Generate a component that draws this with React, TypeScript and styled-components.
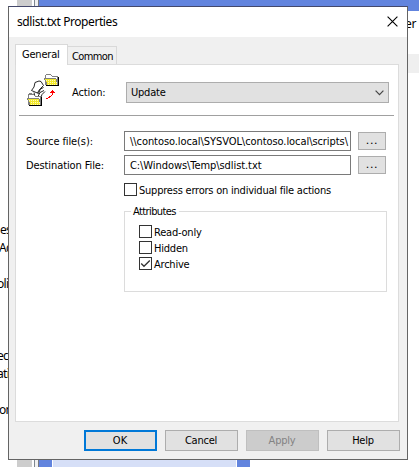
import React from 'react';
import styled, { createGlobalStyle } from 'styled-components';

const GlobalStyle = createGlobalStyle`
  *, *::before, *::after { box-sizing: border-box; }
  html, body, #root { margin: 0; height: 100%; }
  body { overflow: hidden; background: #fff; color: #000; }
`;

const Desktop = styled.div`
  position: relative;
  width: 419px;
  height: 467px;
  overflow: hidden;
  display: flex;
  background: #fff;
  font: 12px/18px "Noto Sans", sans-serif;
`;

const TreePane = styled.div`
  width: 17px;
  padding-top: 221px;
`;

const TreeText = styled.div<{ $shift?: number }>`
  height: 18px;
  white-space: nowrap;
  letter-spacing: -0.7px;
  text-indent: ${(p) => p.$shift ?? 0}px;
`;

const ScrollTrack = styled.div`
  width: 15px;
  background: #cdcdcd;
`;

const Splitter = styled.div`
  width: 7px;
  background: linear-gradient(
    to right,
    #fff 2px, #7f8790 2px, #7f8790 3px, #f0f0f0 3px, #f0f0f0 6px, #77777d 6px
  );
`;

const ContentPane = styled.div`
  flex: 1;
  display: flex;
  flex-direction: column;
`;

const BlueHeader = styled.div`
  height: 11px;
  background: #6284de;
`;

const ColumnTitle = styled.div`
  height: 43px;
  padding-top: 4px;
  text-align: right;
  padding-right: 3px;
  letter-spacing: -0.4px;
`;

const GreyBand = styled.div`
  height: 19px;
  background: #efefef;
`;

const BottomStrip = styled.div`
  height: 8px;
  width: 211px;
  margin-top: auto;
  border: solid #6284de;
  border-width: 0 13px;
  background: #d6dff7;
  box-shadow: inset 1px 0 #fff, inset -1px 0 #fff;
`;

const Dialog = styled.section`
  position: absolute;
  left: 8px;
  top: 6px;
  width: 400px;
  height: 454px;
  display: flex;
  flex-direction: column;
  border: 1px solid #646464;
  border-top-color: #44486b;
  background: #f0f0f0;
  font: 11px/14px "DejaVu Sans Condensed", "DejaVu Sans", sans-serif;
  letter-spacing: -0.22px;
`;

const TitleBar = styled.header`
  height: 30px;
  flex: none;
  display: flex;
  align-items: center;
  justify-content: space-between;
  padding: 0 9px 0 8px;
  background: #fff;
  font: 12px/18px "Noto Sans", sans-serif;
  letter-spacing: -0.42px;
`;

const TabStrip = styled.nav`
  height: 27px;
  flex: none;
  display: flex;
  align-items: flex-end;
  padding-left: 6px;
`;

const Tab = styled.div<{ $active?: boolean }>`
  position: relative;
  width: ${(p) => (p.$active ? 53 : 49)}px;
  height: ${(p) => (p.$active ? 21 : 18)}px;
  margin-bottom: ${(p) => (p.$active ? -1 : 0)}px;
  padding: ${(p) => (p.$active ? '3px 0 0 6px' : '3px 0 0 4px')};
  border: 1px solid #d9d9d9;
  border-bottom: 0;
  border-left-width: ${(p) => (p.$active ? 1 : 0)}px;
  background: ${(p) => (p.$active ? '#fff' : '#f0f0f0')};
  letter-spacing: ${(p) => (p.$active ? -0.2 : -0.6)}px;
`;

const Panel = styled.main`
  width: 384px;
  height: 358px;
  flex: none;
  margin-left: 6px;
  border: 1px solid #dcdcdc;
  background: #fff;
  display: flex;
  flex-direction: column;
`;

const ActionRow = styled.div`
  display: flex;
  align-items: center;
  height: 50px;
  padding: 0 9px 0 11px;
`;

const ActionLabel = styled.label`
  width: 54px;
  margin: 5px 0 0 13px;
  letter-spacing: -0.1px;
`;

const Select = styled.div`
  width: 263px;
  height: 21px;
  margin-top: 5px;
  padding: 1px 4px 0 4px;
  display: flex;
  align-items: center;
  justify-content: space-between;
  border: 1px solid #adadad;
  background: #e1e1e1;
`;

const Separator = styled.hr`
  width: 375px;
  height: 1px;
  margin: 0 0 0 3px;
  flex: none;
  border: 0;
  background: #a0a0a0;
`;

const Fields = styled.div`
  display: grid;
  grid-template-columns: 98px 227px 35px;
  grid-auto-rows: 20px;
  row-gap: 4px;
  padding: 15px 0 0 10px;
`;

const FieldLabel = styled.label`
  padding-top: 4px;
  letter-spacing: -0.1px;
`;

const Input = styled.div`
  height: 20px;
  padding: 3px 0 0 5px;
  border: 1px solid #7a7a7a;
  white-space: nowrap;
  overflow: hidden;
  letter-spacing: -0.07px;
`;

const BrowseButton = styled.button`
  width: 28px;
  height: 18px;
  margin: 1px 0 0 7px;
  padding: 0;
  border: 1px solid #adadad;
  background: #e1e1e1;
  font: 11px/14px "DejaVu Sans", sans-serif;
  letter-spacing: 0.6px;
`;

const Options = styled.div`
  margin-left: 108px;
  padding-top: 8px;
`;

const CheckRow = styled.label`
  height: 16px;
  display: flex;
  align-items: flex-start;
  gap: 2px;
  white-space: nowrap;
`;

const CheckLabel = styled.span`
  padding-top: 1px;
`;

const CheckBox = styled.span`
  width: 13px;
  height: 13px;
  flex: none;
  display: flex;
  border: 1px solid #333;
  background: #fff;
`;

const Group = styled.fieldset`
  width: 263px;
  height: 88px;
  min-width: 0;
  margin: 5px 0 0;
  padding: 7px 0 0 14px;
  border: 1px solid #dcdcdc;
`;

const Legend = styled.legend`
  height: 14px;
  margin-left: -8px;
  padding: 1px 3px 0 2px;
  letter-spacing: -0.6px;
`;

const Footer = styled.footer`
  display: flex;
  justify-content: flex-end;
  gap: 8px;
  padding: 8px 7px 0 0;
`;

const Button = styled.button<{ $primary?: boolean }>`
  width: 73px;
  height: 21px;
  padding: 1px 1px 0 0;
  border: ${(p) => (p.$primary ? '2px solid #0078d7' : '1px solid #adadad')};
  background: #e1e1e1;
  color: #000;
  font: inherit;
  letter-spacing: ${(p) => (p.$primary ? 0.2 : -0.22)}px;
  &:disabled {
    border-color: #bfbfbf;
    background: #ccc;
    color: #838383;
  }
`;

const CloseSvg = styled.svg`
  margin-bottom: 2px;
`;

function CloseIcon() {
  return (
    <CloseSvg width="11" height="11" viewBox="0 0 11 11" stroke="#000" strokeWidth="1.1">
      <path d="M.6.6 10.4 10.4M10.4.6.6 10.4" />
    </CloseSvg>
  );
}

function ChevronIcon() {
  return (
    <svg width="9" height="6" viewBox="0 0 9 6" fill="none" stroke="#444" strokeWidth="1.2">
      <path d="M.6.7 4.5 4.6 8.4.7" />
    </svg>
  );
}

function CheckIcon() {
  return (
    <svg width="11" height="11" viewBox="0 0 11 11" fill="none" stroke="#333" strokeWidth="1.3">
      <path d="M1.2 5.5 4 8.3 9.8 2.5" />
    </svg>
  );
}

function Folder({ x, y }: { x: number; y: number }) {
  return (
    <g transform={`translate(${x} ${y})`}>
      <path fill="#808080" d="M1 1h1V0h5v1h1v1h6v9H1z" />
      <path fill="#fff" d="M2 1h5v1h1v1h5v2H2z" />
      <path fill="#000" d="M14 3h1v9H3v-1h11z" />
      <path fill="#808080" d="M0 4h12v1h1v3h1v3H2V8H1V6H0z" />
      <path fill="url(#dither)" d="M1 5h11v3h1v3H3V8H2V6H1z" />
      <path fill="#000" d="M2 11h12v1H2z" />
    </g>
  );
}

function FolderCopyIcon() {
  return (
    <svg width="32" height="32" viewBox="0 0 32 32">
      <defs>
        <pattern id="dither" width="2" height="2" patternUnits="userSpaceOnUse">
          <path fill="#f3e92b" d="M0 0h2v2H0z" />
          <path fill="#fffbb8" d="M0 0h1v1H0z" />
        </pattern>
      </defs>
      <g shapeRendering="crispEdges">
        <Folder x={17} y={0} />
        <path fill="#808080" d="M1 20h1v-1h5v1h1v1h6v5H1z" />
        <path fill="#fff" d="M2 20h5v1h1v1h5v4H2z" />
      </g>
      <path fill="#fff" d="M4 17 8 8l6-1 4 5v5l-5 7H7z" />
      <g fill="none" stroke="#111" strokeWidth=".9">
        <path fill="#fff" d="M4.500 16.500 7 13 8 8.500l4-1.500 2 .5 2.500 4-3 3-2 5z" />
        <path d="M7 18.500l1 4.500M10.500 19l2-3.500 4-2M10.500 23.500l2.500-5 4-2M13.500 24.500l1.500-4 3-3" />
      </g>
      <g shapeRendering="crispEdges">
        <Folder x={0} y={20} />
        <path
          fill="#f00"
          d="M25 16h1v1h1v1h1v1h-2v2h-1v1h-1v1h-1v1h-2v1h-2v-1h2v-1h1v-1h2v-1h1v-2h-2v-1h1v-1h1z"
        />
      </g>
    </svg>
  );
}

const treeText: Array<[string, number?]> = [
  ['es', 0], ['Ac', -1], [''], ['oli', -3], [''], [''], [''],
  ['ect', -3], ['ati', -3], [''], ['on', -1],
];

const attributes = [
  { label: 'Read-only', checked: false },
  { label: 'Hidden', checked: false },
  { label: 'Archive', checked: true },
];

export default function App() {
  return (
    <>
      <GlobalStyle />
      <Desktop>
        <TreePane>
          {treeText.map(([text, shift], i) => (
            <TreeText key={i} $shift={shift}>{text}</TreeText>
          ))}
        </TreePane>
        <ScrollTrack />
        <Splitter />
        <ContentPane>
          <BlueHeader />
          <ColumnTitle>er</ColumnTitle>
          <GreyBand />
          <BottomStrip />
        </ContentPane>

        <Dialog>
          <TitleBar>
            <span>sdlist.txt Properties</span>
            <CloseIcon />
          </TitleBar>
          <TabStrip>
            <Tab $active>General</Tab>
            <Tab>Common</Tab>
          </TabStrip>
          <Panel>
            <ActionRow>
              <FolderCopyIcon />
              <ActionLabel>Action:</ActionLabel>
              <Select>
                Update
                <ChevronIcon />
              </Select>
            </ActionRow>
            <Separator />
            <Fields>
              <FieldLabel>Source file(s):</FieldLabel>
              <Input>{'\\\\contoso.local\\SYSVOL\\contoso.local\\scripts\\'}</Input>
              <BrowseButton>...</BrowseButton>
              <FieldLabel>Destination File:</FieldLabel>
              <Input>{'C:\\Windows\\Temp\\sdlist.txt'}</Input>
              <BrowseButton>...</BrowseButton>
            </Fields>
            <Options>
              <CheckRow>
                <CheckBox />
                <CheckLabel>Suppress errors on individual file actions</CheckLabel>
              </CheckRow>
              <Group>
                <Legend>Attributes</Legend>
                {attributes.map((a) => (
                  <CheckRow key={a.label}>
                    <CheckBox>{a.checked && <CheckIcon />}</CheckBox>
                    <CheckLabel>{a.label}</CheckLabel>
                  </CheckRow>
                ))}
              </Group>
            </Options>
          </Panel>
          <Footer>
            <Button $primary>OK</Button>
            <Button>Cancel</Button>
            <Button disabled>Apply</Button>
            <Button>Help</Button>
          </Footer>
        </Dialog>
      </Desktop>
    </>
  );
}
